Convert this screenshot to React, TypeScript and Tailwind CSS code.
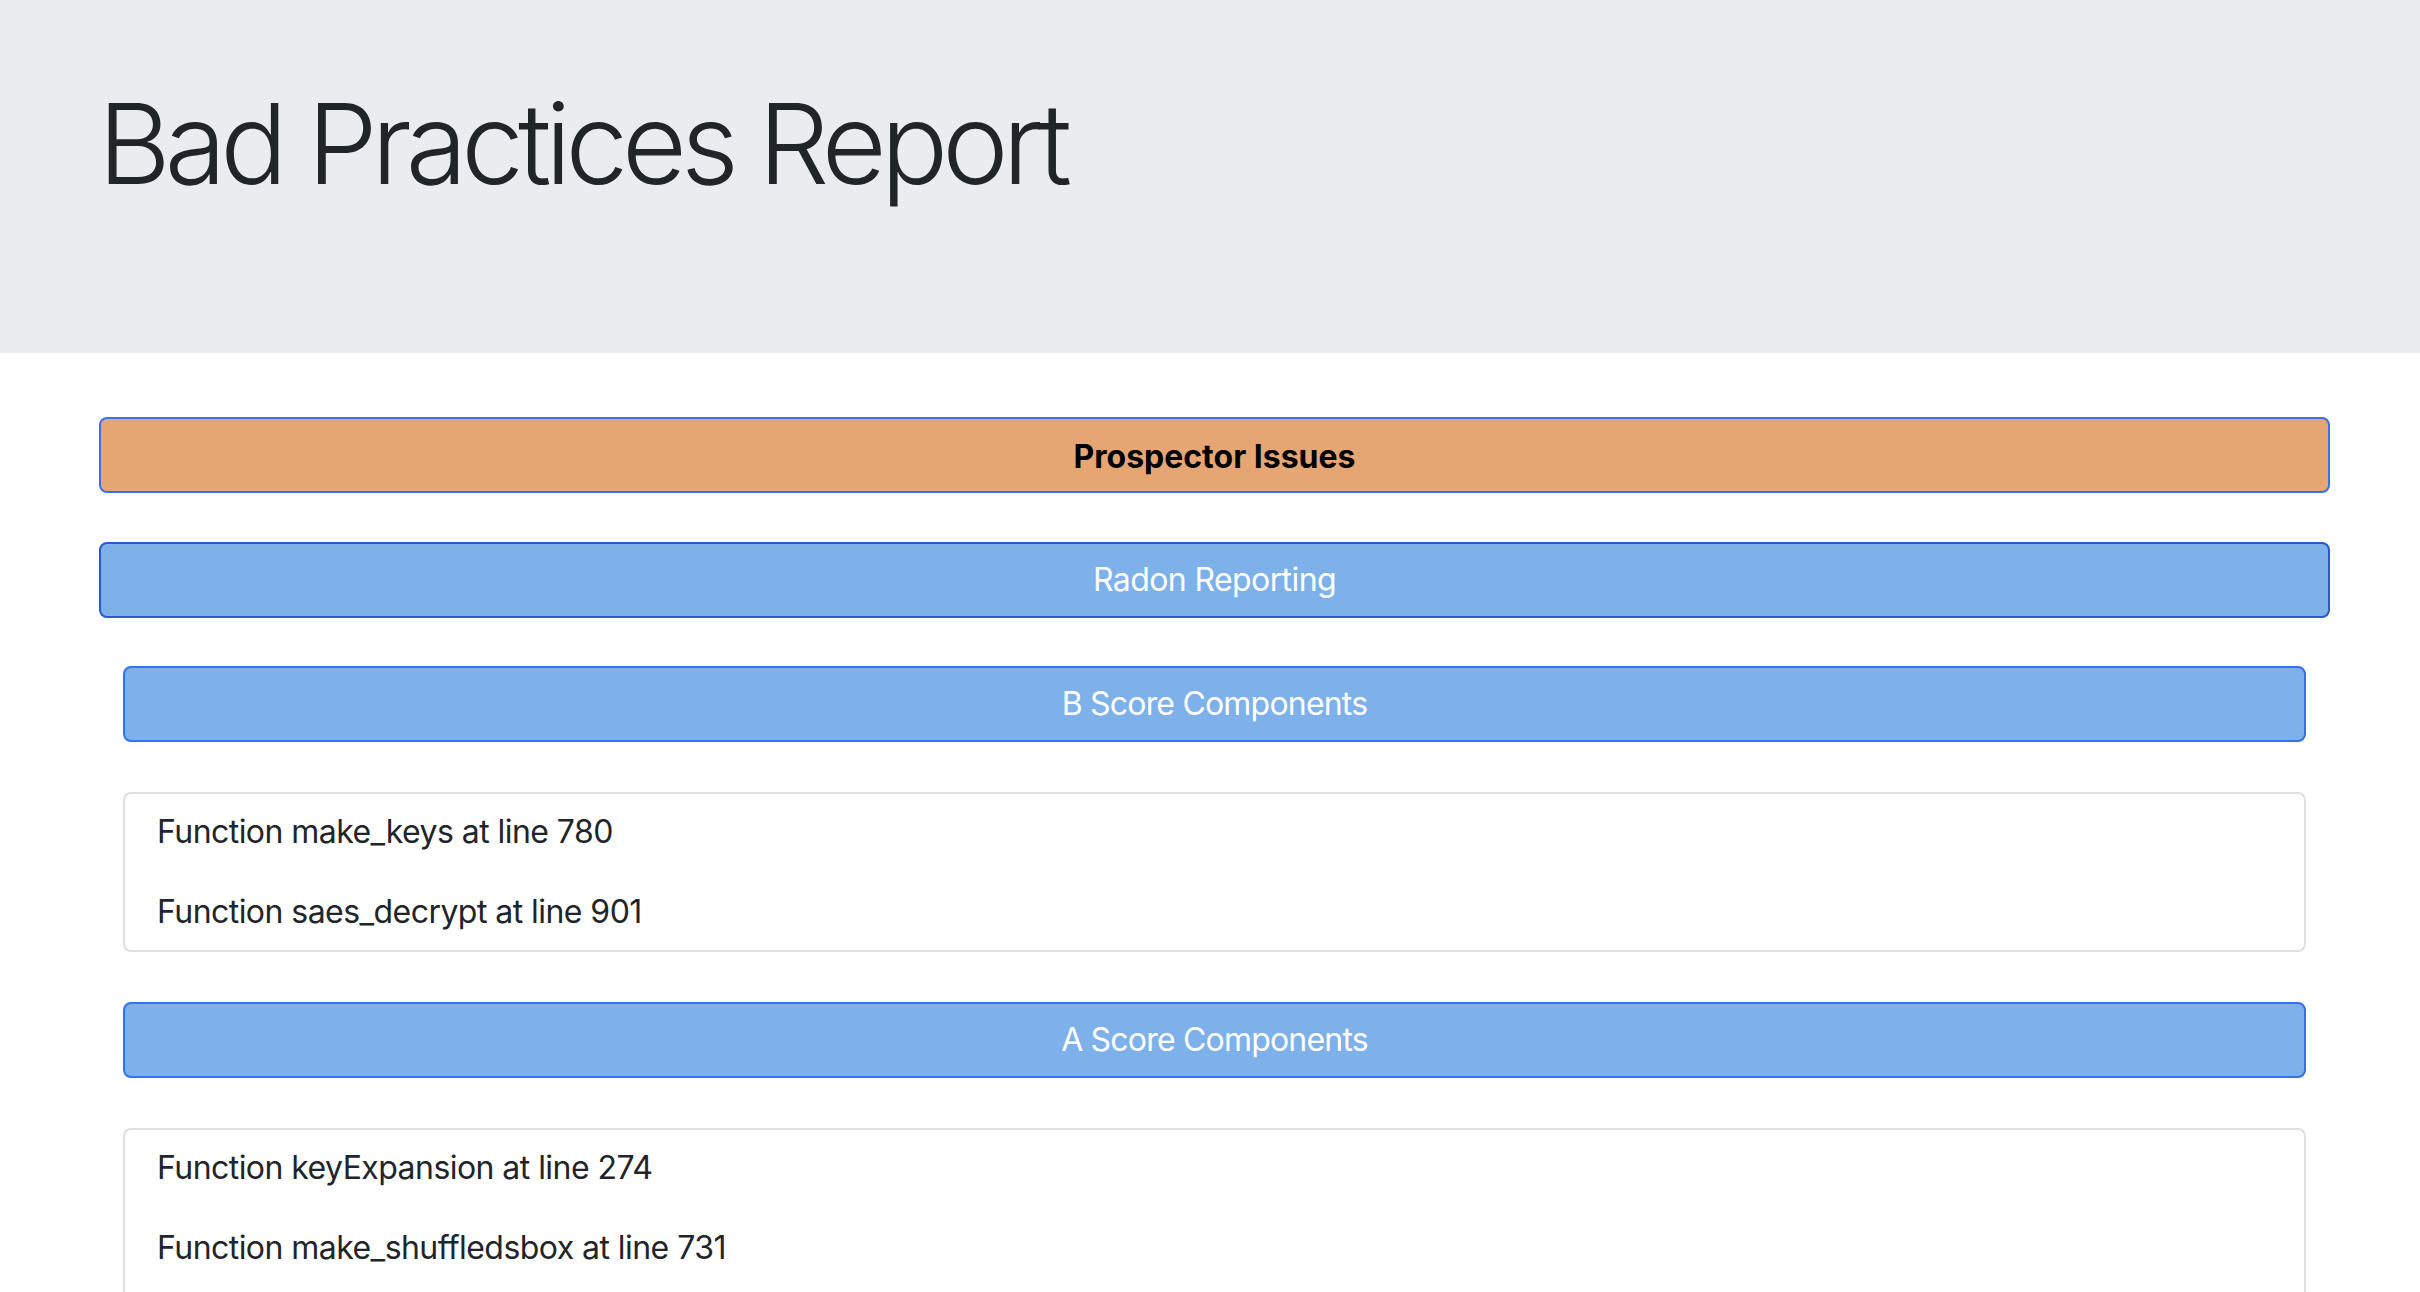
import React from 'react';

const font = { fontFamily: 'Inter, "Liberation Sans", sans-serif' };

const ScoreCard: React.FC<{ items: string[]; extra?: boolean }> = ({ items, extra }) => (
  <div className={`mt-[50px] rounded-[8px] border-2 border-[#dfdfdf] bg-white pl-[32px] pr-[32px] pt-[14px] flex flex-col gap-[32px] ${extra ? 'pb-[60px]' : 'pb-[14px]'}`}>
    {items.map(item => (
      <p key={item} className="text-[32px] leading-[48px] text-[#212529] tracking-[-0.55px]">{item}</p>
    ))}
  </div>
);

const App: React.FC = () => {
  return (
    <div className="min-h-[1292px] bg-white" style={font}>
      <div className="h-[353px] bg-[#ebecf0] pl-[98px] pt-[76px]">
        <h1 className="text-[112px] leading-[1.2] font-light text-[#212529] tracking-[-6px]">Bad Practices Report</h1>
      </div>

      <div className="pl-[99px] pr-[90px] pt-[64px]">
        <button className="w-full h-[76px] rounded-[8px] border-2 border-[#3a6ff0] bg-[#e5a674] text-[32px] font-bold text-black pt-[3px]">
          Prospector Issues
        </button>

        <button className="mt-[49px] w-full h-[76px] rounded-[8px] border-2 border-[#2a59cf] bg-[#7eb1ea] text-[32px] text-white tracking-[-0.6px]">
          Radon Reporting
        </button>

        <div className="px-[24px]">
          <button className="mt-[48px] w-full h-[76px] rounded-[8px] border-2 border-[#3571ef] bg-[#7eb1ea] text-[32px] text-white tracking-[-0.8px]">
            B Score Components
          </button>
          <ScoreCard items={['Function make_keys at line 780', 'Function saes_decrypt at line 901']} />

          <button className="mt-[50px] w-full h-[76px] rounded-[8px] border-2 border-[#3571ef] bg-[#7eb1ea] text-[32px] text-white tracking-[-0.8px]">
            A Score Components
          </button>
          <ScoreCard extra items={['Function keyExpansion at line 274', 'Function make_shuffledsbox at line 731']} />
        </div>
      </div>
    </div>
  );
};

export default App;
